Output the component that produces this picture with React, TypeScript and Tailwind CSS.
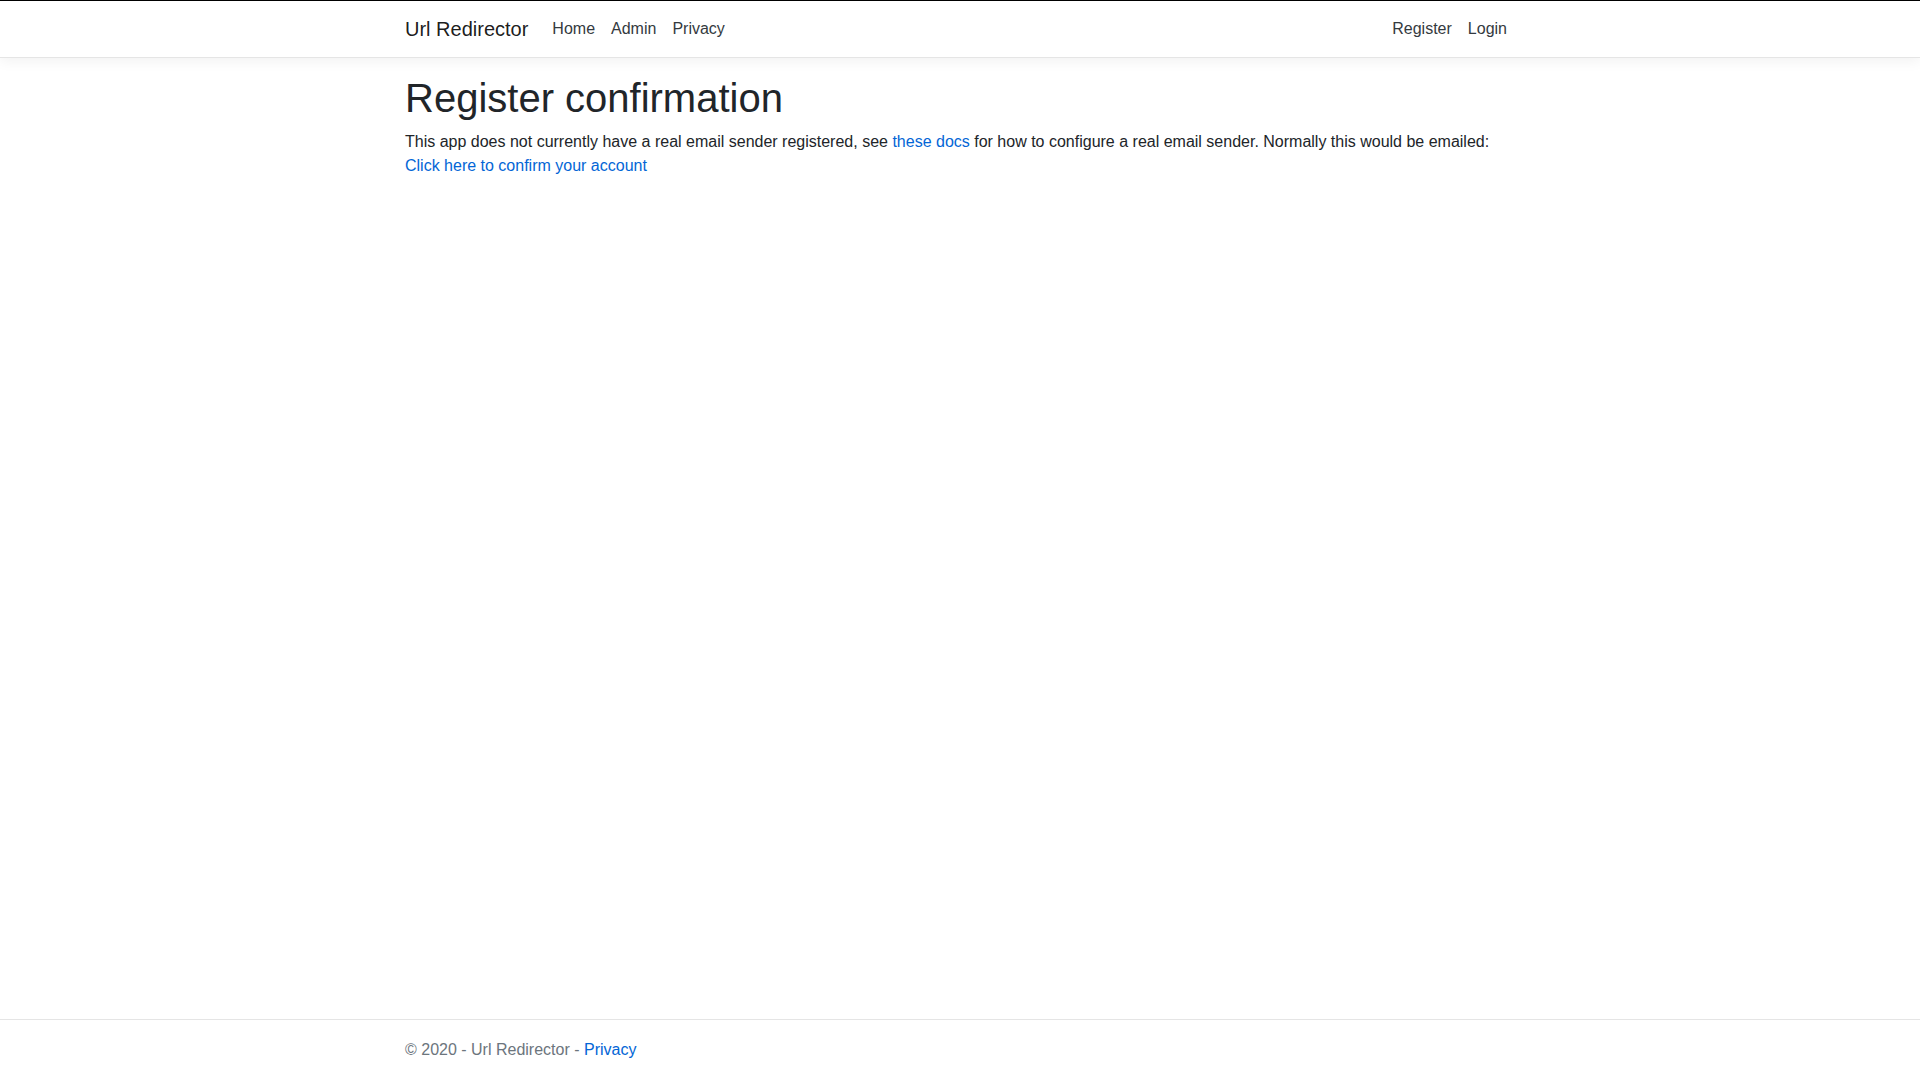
const App = () => {
  return (
    <div className="flex min-h-screen flex-col border-t border-black bg-white font-['Liberation_Sans',Arial,sans-serif] text-base leading-6 text-[#212529]">
      {/* Navbar */}
      <header>
        <nav className="mb-4 border-b border-[#e5e5e5] bg-white px-4 py-2 shadow-[0_0.25rem_0.75rem_rgba(0,0,0,0.05)]">
          <div className="mx-auto flex w-[1140px] items-center px-[15px]">
            <a href="#" className="mr-4 py-[5px] text-xl leading-[30px] text-black/90">
              Url Redirector
            </a>
            <ul className="flex flex-1">
              <li>
                <a href="#" className="block px-2 py-2 text-[#343a40]">
                  Home
                </a>
              </li>
              <li>
                <a href="#" className="block px-2 py-2 text-[#343a40]">
                  Admin
                </a>
              </li>
              <li>
                <a href="#" className="block px-2 py-2 text-[#343a40]">
                  Privacy
                </a>
              </li>
            </ul>
            <ul className="flex">
              <li>
                <a href="#" className="block px-2 py-2 text-[#343a40]">
                  Register
                </a>
              </li>
              <li>
                <a href="#" className="block px-2 py-2 text-[#343a40]">
                  Login
                </a>
              </li>
            </ul>
          </div>
        </nav>
      </header>

      {/* Main */}
      <main className="mx-auto w-[1140px] flex-1 px-[15px] pb-4">
        <h1 className="mb-2 text-[40px] font-medium leading-[48px]">Register confirmation</h1>
        <p className="mb-4">
          This app does not currently have a real email sender registered, see{" "}
          <a href="#" className="text-[#0366d6]">
            these docs
          </a>{" "}
          for how to configure a real email sender. Normally this would be emailed:{" "}
          <a href="#" className="text-[#0366d6]">
            Click here to confirm your account
          </a>
        </p>
      </main>

      {/* Footer */}
      <footer className="whitespace-nowrap border-t border-[#e5e5e5] leading-[60px] text-[#6c757d]">
        <div className="mx-auto w-[1140px] px-[15px]">
          &copy; 2020 - Url Redirector -{" "}
          <a href="#" className="text-[#0366d6]">
            Privacy
          </a>
        </div>
      </footer>
    </div>
  );
};

export default App;
